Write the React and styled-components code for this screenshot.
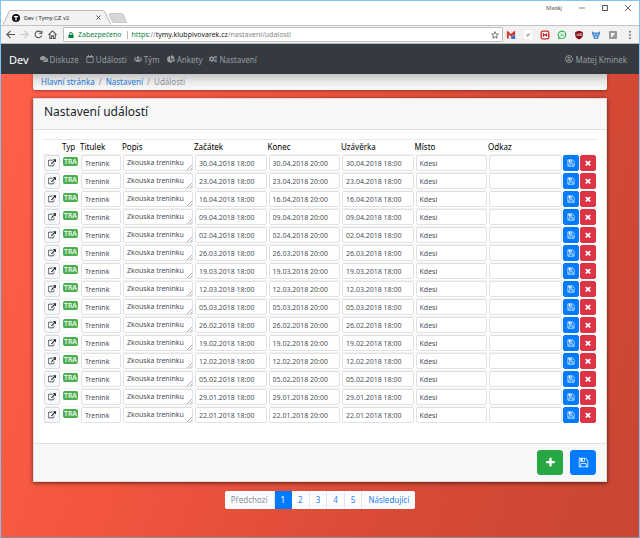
import React from "react";
import styled, { createGlobalStyle, css } from "styled-components";
import { FaComments, FaRegCalendar, FaUsers, FaChartPie, FaCogs, FaRegUserCircle, FaLock } from "react-icons/fa";

const Global = createGlobalStyle`
  *, *::before, *::after { box-sizing: border-box; }
  body { margin: 0; font-family: "Noto Sans", "Open Sans", sans-serif; font-size: 7px; color: #212529; }
  button, input, textarea { font: inherit; margin: 0; }
  a { text-decoration: none; }
  svg { display: block; flex: none; }
`;

const Window = styled.div`
  min-height: 100vh;
  display: flex;
  flex-direction: column;
  border: 1px solid #83c3f3;
  border-bottom-color: #8a8f9b;
  background: #fff;
`;
const TitleBar = styled.div`
  display: flex;
  align-items: flex-start;
  height: 24px;
`;
const Tab = styled.div`
  position: relative;
  display: flex;
  align-items: center;
  gap: 4px;
  width: 108px;
  height: 15px;
  margin: 9px 0 0 2px;
  padding: 0 10px 0 9px;
  color: #333;
  font-family: Roboto, "Noto Sans", sans-serif;
`;
const TabShape = styled.svg`
  position: absolute;
  inset: 0;
`;
const TabTitle = styled.span`
  position: relative;
  flex: 1;
  font-size: 6px;
  white-space: nowrap;
`;
const TabIcon = styled.svg`
  position: relative;
`;
const ChromeButton = styled.button`
  display: flex;
  align-items: center;
  justify-content: center;
  padding: 0;
  border: 0;
  background: none;
  color: #555;
`;
const TabClose = styled(ChromeButton)`
  position: relative;
`;
const NewTab = styled(ChromeButton)`
  margin-top: 12px;
  margin-left: -3px;
`;
const WindowControls = styled.div`
  display: flex;
  align-items: center;
  gap: 17px;
  margin: 1px 8px 0 auto;
  height: 12px;
  color: #555;
  font-size: 6px;
`;
const Toolbar = styled.div`
  display: flex;
  align-items: center;
  height: 19px;
  padding: 0 4px 0 5px;
  background: #f2f2f2;
  border-top: 1px solid #c4c4c4;
  border-bottom: 1px solid #b8b8b8;
`;
const ToolGroup = styled.div`
  display: flex;
  gap: 5px;
  margin-right: 6px;
`;
const Omnibox = styled.div`
  flex: 1;
  display: flex;
  align-items: center;
  height: 15px;
  padding: 0 3px 0 4px;
  border: 1px solid #c0c0c0;
  border-radius: 1px;
  background: #fff;
`;
const Secure = styled.span`
  margin: 0 4px 0 4px;
  padding-right: 5px;
  border-right: 1px solid #bbb;
  color: #0b8043;
  line-height: 8px;
`;
const Address = styled.span`
  flex: 1;
  color: #888;
  line-height: 10px;
  white-space: nowrap;
  em { font-style: normal; color: #0b8043; }
  b { font-weight: 400; color: #222; }
`;
const Extensions = styled.div`
  display: flex;
  gap: 7px;
  margin-left: 3px;
`;

const Navbar = styled.nav`
  display: flex;
  align-items: center;
  height: 30px;
  padding: 0 12px 0 8px;
  background: #343a40;
`;
const Brand = styled.a`
  margin-right: 11px;
  color: #fff;
  font-size: 11px;
`;
const NavLink = styled.a`
  display: flex;
  align-items: center;
  gap: 2px;
  margin-right: 7px;
  color: #9a9da0;
  font-size: 8px;
  ${(p) => p.$end && css`margin: 0 0 0 auto;`}
`;

const Page = styled.main`
  flex: 1;
  padding: 0 32px 28px;
  background: linear-gradient(110deg, #ff604a 0%, #f3563f 30%, #d94a36 68%, #c94534 100%);
`;
const Breadcrumb = styled.ol`
  display: flex;
  gap: 4px;
  margin: 0 0 8px;
  padding: 0 8px;
  height: 16px;
  font-size: 8px;
  line-height: 15px;
  list-style: none;
  border-radius: 0 0 2px 2px;
  background: linear-gradient(#c6c6c6, #eaeaea 50%, #fafafa);
  box-shadow: 0 1px 3px rgba(0, 0, 0, 0.35);
  color: #868e96;
  a { color: #2076d6; }
  li + li::before { content: "/"; margin-right: 4px; color: #868e96; }
`;
const Card = styled.section`
  background: #fff;
  border: 1px solid #e3d9d7;
  box-shadow: 0 1px 4px rgba(0, 0, 0, 0.6);
`;
const CardHeader = styled.header`
  height: 31px;
  padding: 0 10px;
  border-bottom: 1px solid #dfdfdf;
  background: #f7f7f7;
`;
const Title = styled.h1`
  margin: 0;
  font-size: 12px;
  font-weight: 400;
  line-height: 26px;
`;
const CardBody = styled.div`
  padding: 9px 9px 19px;
`;
const CardFooter = styled.footer`
  display: flex;
  justify-content: flex-end;
  gap: 7px;
  height: 38px;
  padding: 6px 10px;
  border-top: 1px solid #dfdfdf;
  background: #f7f7f7;
`;

const Table = styled.table`
  width: 100%;
  table-layout: fixed;
  border-spacing: 0;
`;
const Col = styled.col`
  width: ${(p) => (p.$w ? `${p.$w}px` : "auto")};
`;
const Th = styled.th`
  height: 15px;
  padding: 0;
  border-top: 1px solid #e9ecef;
  font-size: 8px;
  font-weight: 400;
  line-height: 12px;
  color: #000;
  text-align: left;
  white-space: nowrap;
  ${(p) => p.$inset && css`padding-left: 1px;`}
`;
const Td = styled.td`
  height: 18px;
  padding: 0 1px;
  border-top: 1px solid #f1f2f3;
  vertical-align: top;
`;
const fieldStyle = css`
  display: block;
  width: 100%;
  height: 16px;
  padding: 0 3px;
  border: 1px solid #dfe2e5;
  border-radius: 2px;
  background: #fff;
  color: #495057;
  line-height: 14px;
`;
const Field = styled.input`${fieldStyle}`;
const AreaWrap = styled.div`
  position: relative;
`;
const Area = styled.textarea`
  ${fieldStyle}
  resize: none;
  overflow: hidden;
  white-space: nowrap;
`;
const Grip = styled.svg`
  position: absolute;
  right: 1px;
  bottom: 1px;
`;
const tones = {
  light: ["#f8f9fa", "#212529", "#d9dcdf"],
  blue: ["#007bff", "#fff", "#007bff"],
  red: ["#dc3545", "#fff", "#dc3545"],
  green: ["#28a745", "#fff", "#28a745"],
};
const Button = styled.button`
  display: flex;
  align-items: center;
  justify-content: center;
  width: 100%;
  height: 16px;
  padding: 0;
  border: 1px solid ${(p) => tones[p.$tone][2]};
  border-radius: 2px;
  background: ${(p) => tones[p.$tone][0]};
  color: ${(p) => tones[p.$tone][1]};
  ${(p) => p.$large && css`width: 26px; height: 25px; border-radius: 3px;`}
`;
const ActionTd = styled(Td)`
  padding: 0 1px 0 0;
`;
const Badge = styled.span`
  display: block;
  width: 15px;
  height: 9px;
  margin: 2px 0 0 1px;
  border-radius: 2px;
  background: #4caf50;
  color: #fff;
  font-size: 7px;
  font-weight: 500;
  line-height: 9px;
  text-align: center;
`;

const Pagination = styled.ul`
  display: flex;
  width: fit-content;
  margin: 9px auto 0;
  padding: 0;
  list-style: none;
  border-radius: 2px;
  overflow: hidden;
  background: #fff;
`;
const PageLink = styled.a`
  display: block;
  height: 18px;
  padding: 0 6px;
  border-right: 1px solid #e3e6e9;
  color: #1a7df5;
  font-size: 8px;
  line-height: 18px;
  li:last-child > & { border-right: 0; }
  ${(p) => p.$muted && css`color: #868e96;`}
  ${(p) => p.$active && css`background: #007bff; border-color: #007bff; color: #fff;`}
`;

const paths = {
  save: "M512 1536h768v-384h-768v384zm896 0h128v-896q0-14-10-38.5t-20-34.5l-281-281q-10-10-34-20t-39-10v416q0 40-28 68t-68 28h-576q-40 0-68-28t-28-68v-416h-128v1280h128v-416q0-40 28-68t68-28h832q40 0 68 28t28 68v416zm-384-928v-320q0-13-9.5-22.5t-22.5-9.5h-192q-13 0-22.5 9.5t-9.5 22.5v320q0 13 9.5 22.5t22.5 9.5h192q13 0 22.5-9.5t9.5-22.5zm640 32v928q0 40-28 68t-68 28h-1344q-40 0-68-28t-28-68v-1344q0-40 28-68t68-28h928q40 0 88 20t76 48l280 280q28 28 48 76t20 88z",
  open: "M1472 992v320q0 119-84.5 203.5t-203.5 84.5h-832q-119 0-203.5-84.5t-84.5-203.5v-832q0-119 84.5-203.5t203.5-84.5h704q14 0 23 9t9 23v64q0 14-9 23t-23 9h-704q-66 0-113 47t-47 113v832q0 66 47 113t113 47h832q66 0 113-47t47-113v-320q0-14 9-23t23-9h64q14 0 23 9t9 23zm384-864v512q0 26-19 45t-45 19-45-19l-176-176-652 652q-10 10-23 10t-23-10l-114-114q-10-10-10-23t10-23l652-652-176-176q-19-19-19-45t19-45 45-19h512q26 0 45 19t19 45z",
  times: "M1490 1322q0 40-28 68l-136 136q-28 28-68 28t-68-28l-294-294-294 294q-28 28-68 28t-68-28l-136-136q-28-28-28-68t28-68l294-294-294-294q-28-28-28-68t28-68l136-136q28-28 68-28t68 28l294 294 294-294q28-28 68-28t68 28l136 136q28 28 28 68t-28 68l-294 294 294 294q28 28 28 68z",
  plus: "M1600 736v192q0 40-28 68t-68 28h-416v416q0 40-28 68t-68 28h-192q-40 0-68-28t-28-68v-416h-416q-40 0-68-28t-28-68v-192q0-40 28-68t68-28h416v-416q0-40 28-68t68-28h192q40 0 68 28t28 68v416h416q40 0 68 28t28 68z",
};
const Icon = ({ name, size }) => (
  <svg width={size} height={size} viewBox={name === "open" ? "64 0 1792 1792" : "0 0 1792 1792"} fill="currentColor" aria-hidden="true">
    <path d={paths[name]} />
  </svg>
);
const Line = ({ size = 8, children }) => (
  <svg width={size} height={size} viewBox="0 0 10 10" fill="none" stroke="currentColor" strokeWidth="1.2" aria-hidden="true">
    {children}
  </svg>
);
const Ext = ({ children }) => (
  <svg width="10" height="10" viewBox="0 0 10 10" fill="none" aria-hidden="true">{children}</svg>
);

const extensions = [
  ["Gmail", <><path d="M1 1.500h8v7H1z" fill="#e8e8ee" /><path d="M1.800 8.500V2.500L5 5.200l3.200-2.700v3" stroke="#d93025" strokeWidth="1.800" /><path d="M5.200 5.500h4v3.500h-4z" fill="#3f6fc9" /></>],
  ["Odeslat", <><path d="M1 1h8v8H1z" fill="#fff" /><path d="M2 5l6-2-3.500 4.200L3.800 5.400z" fill="#a8aaac" /></>],
  ["Blokování", <><rect x="1.200" y="1.200" width="7.600" height="7.600" rx="1.500" fill="#fff" stroke="#c62828" strokeWidth="1.300" /><path d="M3 3.400v3.200L5 5zM7 3.400v3.200L5 5z" fill="#c62828" stroke="#c62828" strokeWidth=".7" /></>],
  ["Chat", <><circle cx="5" cy="4.800" r="3.700" fill="#fff" stroke="#35b954" strokeWidth="1.200" /><path d="M1 9.200l.7-2.500 1.800 1.800z" fill="#35b954" /><path d="M3.200 4h3.600M3.200 5.700h3.600" stroke="#35b954" strokeWidth=".8" /></>],
  ["Štít", <><path d="M5 .8l3.800 1.300v3C8.800 7.200 7 8.700 5 9.500 3 8.700 1.200 7.200 1.200 5.100v-3z" fill="#850d1b" /><path d="M3 3.600v2h1.600v-2M5.800 3.600h1.500v1.900H5.800z" stroke="#fff" strokeWidth=".6" /></>],
  ["Kočka", <><path d="M1 1.200l2 1.300h4l2-1.300v3L7.700 6.300 7.200 9H2.800l-.5-2.700L1 4.200z" fill="#4c91cf" /><path d="M3.200 4.500h1M5.800 4.500h1M4 7h2" stroke="#fff" /></>],
  ["Rámeček", <><rect x="1" y="1" width="8" height="8" rx="1" fill="#999" /><path d="M3 7.200V3h4L5.500 5.500z" fill="#fff" /></>],
  ["Nabídka", <path d="M5 1v1.600M5 4.200v1.600M5 7.400V9" stroke="#444" strokeWidth="1.400" />],
];

const nav = [
  ["Diskuze", FaComments],
  ["Události", FaRegCalendar],
  ["Tým", FaUsers],
  ["Ankety", FaChartPie],
  ["Nastavení", FaCogs],
];
const columns = [
  ["", 18], ["Typ", 19], ["Titulek", 42], ["Popis", 72], ["Začátek"],
  ["Konec"], ["Uzávěrka"], ["Místo"], ["Odkaz", 75], ["", 17], ["", 17],
];
const days = [
  "30.04.2018", "23.04.2018", "16.04.2018", "09.04.2018", "02.04.2018",
  "26.03.2018", "19.03.2018", "12.03.2018", "05.03.2018", "26.02.2018",
  "19.02.2018", "12.02.2018", "05.02.2018", "29.01.2018", "22.01.2018",
];

const EventRow = ({ day }) => (
  <tr>
    <Td><Button $tone="light" aria-label={`Otevřít ${day}`}><Icon name="open" size={8} /></Button></Td>
    <Td><Badge>TRA</Badge></Td>
    <Td><Field aria-label="Titulek" defaultValue="Trenink" /></Td>
    <Td>
      <AreaWrap>
        <Area aria-label="Popis" rows={1} defaultValue="Zkouska treninku" />
        <Grip width="5" height="5" viewBox="0 0 5 5" stroke="#888" strokeWidth=".7" aria-hidden="true">
          <path d="M0 5l5-5M3 5l2-2" />
        </Grip>
      </AreaWrap>
    </Td>
    <Td><Field aria-label="Začátek" defaultValue={`${day} 18:00`} /></Td>
    <Td><Field aria-label="Konec" defaultValue={`${day} 20:00`} /></Td>
    <Td><Field aria-label="Uzávěrka" defaultValue={`${day} 18:00`} /></Td>
    <Td><Field aria-label="Místo" defaultValue="Kdesi" /></Td>
    <Td><Field aria-label="Odkaz" defaultValue="" /></Td>
    <ActionTd><Button $tone="blue" aria-label={`Uložit ${day}`}><Icon name="save" size={8} /></Button></ActionTd>
    <ActionTd><Button $tone="red" aria-label={`Smazat ${day}`}><Icon name="times" size={8} /></Button></ActionTd>
  </tr>
);

const Browser = () => (
  <>
    <TitleBar>
      <Tab>
        <TabShape width="108" height="15" viewBox="0 0 108 15" aria-hidden="true">
          <path d="M0 15L6 2Q7 .5 8 .5H99Q101 .5 102 2L108 15" fill="#f2f2f2" stroke="#b9b9b9" />
        </TabShape>
        <TabIcon width="8" height="8" viewBox="0 0 8 8" aria-hidden="true">
          <circle cx="4" cy="4" r="4" fill="#111" />
          <path d="M2 2.700h4M4 2.700V6.500" stroke="#fff" strokeWidth="1.200" />
        </TabIcon>
        <TabTitle>Dev | Tymy.CZ v2</TabTitle>
        <TabClose aria-label="Zavřít kartu"><Line size={5}><path d="M1 1l8 8M9 1L1 9" strokeWidth="2" /></Line></TabClose>
      </Tab>
      <NewTab aria-label="Nová karta">
        <svg width="19" height="10" viewBox="0 0 19 10" aria-hidden="true">
          <path d="M1.500.5H13.500Q15 .5 15.500 2L18.500 9.500H6Q4.500 9.500 4 8L1 1.500z" fill="#d6d6d6" stroke="#c6c6c6" />
        </svg>
      </NewTab>
      <WindowControls>
        <span>Matěj</span>
        <ChromeButton aria-label="Minimalizovat"><Line size={6}><path d="M0 5h10" /></Line></ChromeButton>
        <ChromeButton aria-label="Maximalizovat"><Line size={6}><path d="M1 1h8v8H1z" strokeWidth="1.700" /></Line></ChromeButton>
        <ChromeButton aria-label="Zavřít"><Line size={6}><path d="M0 0l10 10M10 0L0 10" strokeWidth="1.500" /></Line></ChromeButton>
      </WindowControls>
    </TitleBar>
    <Toolbar>
      <ToolGroup>
        <ChromeButton aria-label="Zpět"><Line size={9}><path d="M10 5H1M5 1L1 5l4 4" /></Line></ChromeButton>
        <ChromeButton aria-label="Vpřed"><Line size={9}><path d="M0 5h9M5 1l4 4-4 4" stroke="#c8c8c8" /></Line></ChromeButton>
        <ChromeButton aria-label="Obnovit"><Line size={9}><path d="M8.500 6A3.700 3.700 0 1 1 8 2.800M8.700.8v3H5.700" /></Line></ChromeButton>
        <ChromeButton aria-label="Domů"><Line size={9}><path d="M.5 5.500L5 1l4.500 4.500M2 4.500v5h2V6.500h2v3h2v-5" /></Line></ChromeButton>
      </ToolGroup>
      <Omnibox>
        <FaLock size={6} color="#0b8043" />
        <Secure>Zabezpečeno</Secure>
        <Address><em>https</em>://<b>tymy.klubpivovarek.cz</b>/nastaveni/udalosti</Address>
        <ChromeButton aria-label="Přidat záložku">
          <Line><path d="M5 .8l1.200 2.900 3 .2-2.300 2 .7 3L5 7.300 2.400 8.900l.7-3-2.300-2 3-.2z" strokeWidth="1" /></Line>
        </ChromeButton>
      </Omnibox>
      <Extensions>
        {extensions.map(([label, art]) => (
          <ChromeButton key={label} aria-label={label}><Ext>{art}</Ext></ChromeButton>
        ))}
      </Extensions>
    </Toolbar>
  </>
);

export default function App() {
  return (
    <Window>
      <Global />
      <Browser />
      <Navbar>
        <Brand href="#">Dev</Brand>
        {nav.map(([label, Glyph]) => (
          <NavLink key={label} href="#"><Glyph size={8} />{label}</NavLink>
        ))}
        <NavLink href="#" $end><FaRegUserCircle size={8} />Matej Kminek</NavLink>
      </Navbar>
      <Page>
        <Breadcrumb>
          <li><a href="#">Hlavní stránka</a></li>
          <li><a href="#">Nastavení</a></li>
          <li>Události</li>
        </Breadcrumb>
        <Card>
          <CardHeader><Title>Nastavení událostí</Title></CardHeader>
          <CardBody>
            <Table>
              <colgroup>{columns.map(([, w], i) => <Col key={i} $w={w} />)}</colgroup>
              <thead>
                <tr>{columns.map(([label], i) => <Th key={i} $inset={label === "Typ"}>{label}</Th>)}</tr>
              </thead>
              <tbody>{days.map((day) => <EventRow key={day} day={day} />)}</tbody>
            </Table>
          </CardBody>
          <CardFooter>
            <Button $tone="green" $large aria-label="Přidat"><Icon name="plus" size={11} /></Button>
            <Button $tone="blue" $large aria-label="Uložit vše"><Icon name="save" size={11} /></Button>
          </CardFooter>
        </Card>
        <Pagination>
          <li><PageLink href="#" $muted>Předchozí</PageLink></li>
          {[1, 2, 3, 4, 5].map((n) => (
            <li key={n}><PageLink href="#" $active={n === 1}>{n}</PageLink></li>
          ))}
          <li><PageLink href="#">Následující</PageLink></li>
        </Pagination>
      </Page>
    </Window>
  );
}
